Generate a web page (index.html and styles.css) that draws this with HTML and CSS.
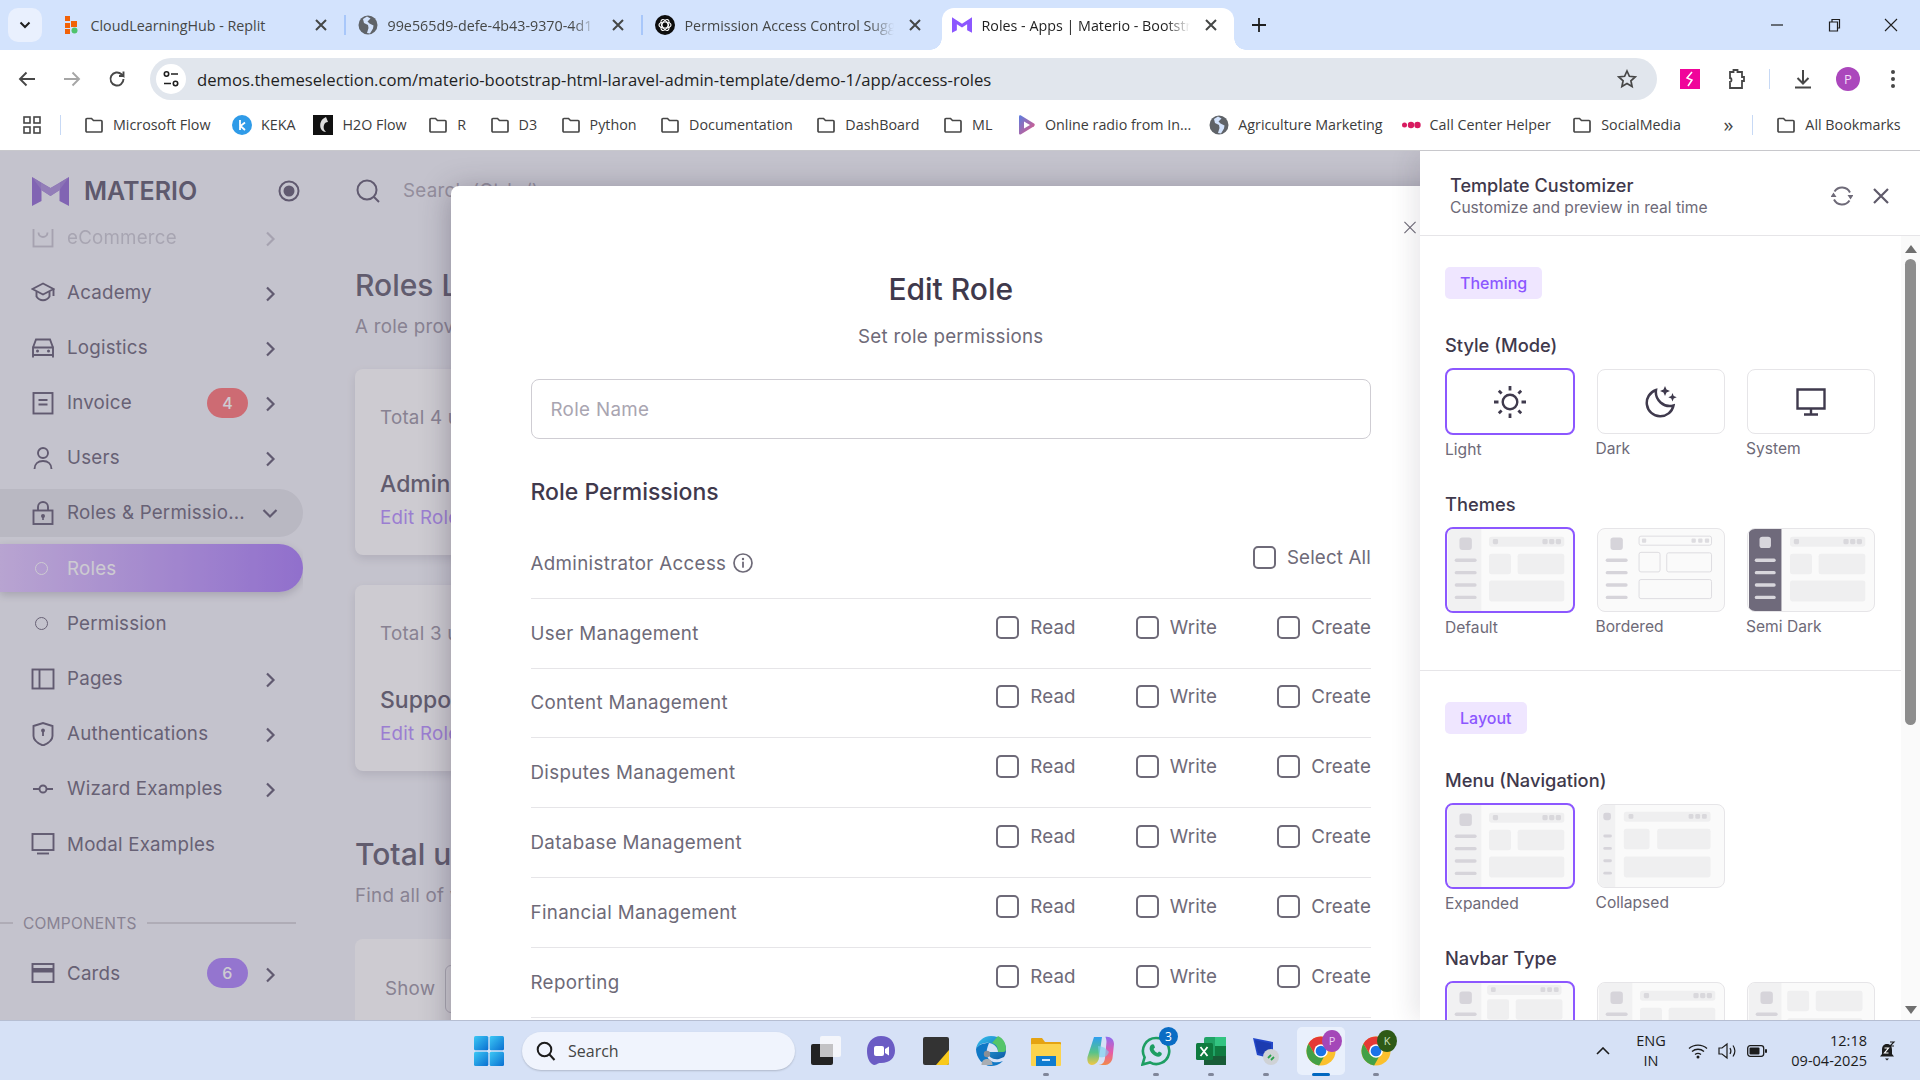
FILE: index.html
```html
<!DOCTYPE html>
<html lang="en">
<head>
  <meta charset="UTF-8" />
  <title>Roles - Apps | Materio - Bootstrap Admin Template</title>
  <link rel="stylesheet" href="styles.css">
</head>
<body>
  <svg class="defs" width="0" height="0" aria-hidden="true">
    <defs>
      <linearGradient id="gEdge" x1="0" y1="0" x2="1" y2="1"><stop offset="0" stop-color="#35c1f1"/><stop offset="1" stop-color="#0c59a4"/></linearGradient>
      <linearGradient id="gStart" x1="0" y1="0" x2="1" y2="1"><stop offset="0" stop-color="#3cc8f5"/><stop offset="1" stop-color="#0a6fd1"/></linearGradient>
      <linearGradient id="gCopA" x1="0" y1="0" x2="0" y2="1"><stop offset="0" stop-color="#2f9ff0"/><stop offset=".55" stop-color="#56c38a"/><stop offset="1" stop-color="#f2c744"/></linearGradient>
      <linearGradient id="gCopB" x1="0" y1="0" x2="0" y2="1"><stop offset="0" stop-color="#8f6cf0"/><stop offset=".55" stop-color="#e65ca8"/><stop offset="1" stop-color="#f28a4a"/></linearGradient>
      <linearGradient id="gRadio" x1="0" y1="0" x2="1" y2="1"><stop offset="0" stop-color="#5a7de0"/><stop offset="1" stop-color="#e8567f"/></linearGradient>

      <symbol id="i-folder" viewBox="0 0 20 20"><path d="M2 4.500a1 1 0 0 1 1-1h4.500l2 2H17a1 1 0 0 1 1 1V16a1 1 0 0 1-1 1H3a1 1 0 0 1-1-1z" fill="none" stroke="currentColor" stroke-width="1.700"/></symbol>
      <symbol id="i-globe" viewBox="0 0 20 20"><circle cx="10" cy="10" r="9.500" fill="#5f6368"/><path d="M9 1.500 5 4l1 4 4 2 .5 3-1.500 5 3 .5 3-5 .5-3-4-2-2-2 3-3z" fill="#d3e3fd"/></symbol>
      <symbol id="i-x" viewBox="0 0 14 14"><path d="M2 2l10 10M12 2 2 12" fill="none" stroke="currentColor" stroke-width="2"/></symbol>
      <symbol id="i-chev" viewBox="0 0 24 24"><path d="M9 5.500 15.500 12 9 18.500" fill="none" stroke="currentColor" stroke-width="2.200"/></symbol>
      <symbol id="i-bag" viewBox="0 0 24 24"><g fill="none" stroke="currentColor" stroke-width="1.900"><rect x="2.500" y="2.500" width="19" height="19"/><path d="M7.500 7.500a4.500 4.500 0 0 0 9 0"/></g></symbol>
      <symbol id="i-cap" viewBox="0 0 24 24"><g fill="none" stroke="currentColor" stroke-width="1.900"><path d="M12 3.500 1.500 9 12 14.500 22.500 9z"/><path d="M5.500 11.500v5c1.500 2.500 3.700 3.700 6.500 3.700s5-1.200 6.500-3.700v-5M22.500 9v7"/></g></symbol>
      <symbol id="i-car" viewBox="0 0 24 24"><g fill="none" stroke="currentColor" stroke-width="1.900"><path d="M2 12.500 5 4.500h14l3 8M2 12.500h20V20H2zM2 20v2.500M22 20v2.500"/></g><circle cx="6.500" cy="16" r="1.500" fill="currentColor"/><circle cx="17.500" cy="16" r="1.500" fill="currentColor"/></symbol>
      <symbol id="i-invoice" viewBox="0 0 24 24"><g fill="none" stroke="currentColor" stroke-width="1.900"><rect x="2.500" y="2" width="19" height="20.500"/><path d="M7.500 9h9M7.500 13.500h9"/></g></symbol>
      <symbol id="i-user" viewBox="0 0 24 24"><g fill="none" stroke="currentColor" stroke-width="1.900"><circle cx="12" cy="7" r="5"/><path d="M3.500 23c0-5 3.500-8 8.500-8s8.500 3 8.500 8"/></g></symbol>
      <symbol id="i-lock" viewBox="0 0 24 24"><g fill="none" stroke="currentColor" stroke-width="1.900"><rect x="2.500" y="9.500" width="19" height="13.500"/><path d="M7 9.500V6a5 5 0 0 1 10 0v3.500"/></g><circle cx="12" cy="15" r="2" fill="currentColor"/><rect x="11.200" y="15" width="1.600" height="4" fill="currentColor"/></symbol>
      <symbol id="i-layout" viewBox="0 0 24 24"><g fill="none" stroke="currentColor" stroke-width="1.900"><rect x="1.500" y="2.500" width="21" height="19"/><path d="M8.500 2.500v19"/></g></symbol>
      <symbol id="i-shield" viewBox="0 0 24 24"><path d="M2.500 4 12 1l9.500 3v10c0 4-3.500 7-9.500 9.500C6 21 2.500 18 2.500 14z" fill="none" stroke="currentColor" stroke-width="1.900"/><circle cx="12" cy="8.500" r="1.900" fill="currentColor"/><rect x="11.100" y="8.500" width="1.800" height="5.500" fill="currentColor"/></symbol>
      <symbol id="i-wizard" viewBox="0 0 24 24"><g fill="none" stroke="currentColor" stroke-width="1.900"><circle cx="12" cy="12" r="3.500"/><path d="M2 12h6.500M15.500 12H22"/></g></symbol>
      <symbol id="i-screen" viewBox="0 0 24 24"><g fill="none" stroke="currentColor" stroke-width="1.900"><rect x="1.500" y="2" width="21" height="16"/><path d="M6 21.500h12"/></g></symbol>
      <symbol id="i-card" viewBox="0 0 24 24"><rect x="1.500" y="3" width="21" height="18" fill="none" stroke="currentColor" stroke-width="1.900"/><rect x="1.500" y="7" width="21" height="4.500" fill="currentColor"/></symbol>

      <symbol id="t-side" viewBox="0 0 130 86">
        <rect x="12" y="9" width="13" height="13" rx="3" fill="#d6d4da"/>
        <g fill="#d6d4da"><rect x="7" y="31" width="23" height="3.500" rx="1.700"/><rect x="7" y="44" width="23" height="3.500" rx="1.700"/><rect x="7" y="57" width="23" height="3.500" rx="1.700"/><rect x="7" y="70" width="23" height="3.500" rx="1.700"/></g>
      </symbol>
      <symbol id="t-main" viewBox="0 0 130 86">
        <rect x="43" y="8" width="79" height="10.500" rx="2.500" fill="#efeff0"/>
        <g fill="#d9d8dc"><rect x="47" y="10.500" width="5.500" height="5.500" rx="1.500"/><rect x="99" y="10.500" width="5.500" height="5.500" rx="1.500"/><rect x="106" y="10.500" width="5.500" height="5.500" rx="1.500"/><rect x="113" y="10.500" width="5.500" height="5.500" rx="1.500"/></g>
        <g fill="#efeff0"><rect x="43" y="26" width="23" height="21.500" rx="2.500"/><rect x="73" y="26" width="49" height="21.500" rx="2.500"/><rect x="43" y="54" width="79" height="22" rx="2.500"/></g>
      </symbol>
      <symbol id="t-default" viewBox="0 0 130 86">
        <rect width="35" height="86" fill="#f1f1f2"/>
        <use href="#t-side"/><use href="#t-main"/>
      </symbol>
      <symbol id="t-bordered" viewBox="0 0 130 86">
        <use href="#t-side"/>
        <g fill="none" stroke="#dcdbdf"><rect x="42" y="7.500" width="76" height="9.500" rx="2"/><rect x="42" y="24.500" width="22" height="20.500" rx="2"/><rect x="71" y="25" width="47" height="20" rx="2"/><rect x="42" y="53" width="76" height="20" rx="2"/></g>
        <g fill="#dddce0"><rect x="45" y="10" width="4.500" height="4.500" rx="1"/><rect x="97" y="10" width="4.500" height="4.500" rx="1"/><rect x="104" y="10" width="4.500" height="4.500" rx="1"/><rect x="111" y="10" width="4.500" height="4.500" rx="1"/></g>
      </symbol>
      <symbol id="t-semi" viewBox="0 0 130 86">
        <rect width="34" height="86" fill="#6f6a7b"/>
        <rect x="11" y="8" width="12" height="12" rx="3" fill="#d8d6dc"/>
        <g fill="#d8d6dc"><rect x="6" y="31" width="22" height="3.500" rx="1.700"/><rect x="6" y="44" width="22" height="3.500" rx="1.700"/><rect x="6" y="57" width="22" height="3.500" rx="1.700"/><rect x="6" y="70" width="22" height="3.500" rx="1.700"/></g>
        <use href="#t-main"/>
      </symbol>
      <symbol id="t-collapsed" viewBox="0 0 130 86">
        <rect width="17" height="86" fill="#f1f1f2"/>
        <rect x="4.500" y="8" width="8" height="8" rx="2.500" fill="#d6d4da"/>
        <g fill="#d6d4da"><rect x="4.500" y="31" width="9" height="3" rx="1.500"/><rect x="4.500" y="44" width="9" height="3" rx="1.500"/><rect x="4.500" y="57" width="9" height="3" rx="1.500"/><rect x="4.500" y="70" width="9" height="3" rx="1.500"/></g>
        <rect x="26" y="7" width="91" height="10.500" rx="2.500" fill="#efeff0"/>
        <g fill="#d9d8dc"><rect x="31" y="9.500" width="5" height="5" rx="1.300"/><rect x="94" y="9.500" width="5" height="5" rx="1.300"/><rect x="101" y="9.500" width="5" height="5" rx="1.300"/><rect x="108" y="9.500" width="5" height="5" rx="1.300"/></g>
        <g fill="#efeff0"><rect x="26" y="25" width="27" height="21.500" rx="2.500"/><rect x="61" y="25" width="56" height="21.500" rx="2.500"/><rect x="26" y="54" width="91" height="22" rx="2.500"/></g>
      </symbol>
      <symbol id="t-sticky" viewBox="0 0 130 86">
        <rect width="35" height="86" fill="#f1f1f2"/>
        <use href="#t-side"/>
        <rect x="41" y="2" width="78" height="10.500" rx="2.500" fill="#efeff0"/>
        <g fill="#d9d8dc"><rect x="45" y="4.500" width="5" height="5" rx="1.300"/><rect x="97" y="4.500" width="5" height="5" rx="1.300"/><rect x="104" y="4.500" width="5" height="5" rx="1.300"/><rect x="111" y="4.500" width="5" height="5" rx="1.300"/></g>
        <g fill="#efeff0"><rect x="41" y="17" width="23" height="21.500" rx="2.500"/><rect x="71" y="17" width="49" height="21.500" rx="2.500"/></g>
      </symbol>
      <symbol id="t-hidden" viewBox="0 0 130 86">
        <rect width="34" height="86" fill="#f1f1f2"/>
        <use href="#t-side"/>
        <g fill="#efeff0"><rect x="40" y="8" width="23" height="21.500" rx="2.500"/><rect x="70" y="8" width="49" height="21.500" rx="2.500"/><rect x="40" y="37" width="79" height="22" rx="2.500"/></g>
      </symbol>

      <symbol id="c-chrome" viewBox="0 0 32 32">
        <circle cx="16" cy="16" r="15.500" fill="#fbc02d"/>
        <path d="M16 .5A15.500 15.500 0 0 0 2.600 8.200L9 19l7-3h14.500A15.500 15.500 0 0 0 16 .5z" fill="#e53935"/>
        <path d="M2.600 8.200A15.500 15.500 0 0 0 14 31.400L21 19 9 19z" fill="#43a047"/>
        <circle cx="16" cy="16" r="7.300" fill="#fff"/><circle cx="16" cy="16" r="5.700" fill="#1a73e8"/>
      </symbol>
    </defs>
  </svg>

  <header class="tabstrip">
    <button class="tab-list"><svg width="12" height="8" viewBox="0 0 12 8"><path d="M1.500 1.500 6 6l4.500-4.500" fill="none" stroke="#1f1f1f" stroke-width="2"/></svg></button>
    <div class="tab sep">
      <svg class="fav" viewBox="0 0 20 20"><path d="M4 1h5v5H4z" fill="#f26207"/><path d="M10 6h6v6h-6z" fill="#f26207"/><path d="M4 8h5v5H4zM4 14h5v5H4z" fill="#f26207"/><circle cx="13.500" cy="15.500" r="3" fill="#4fc36c"/></svg>
      <span class="tab-title">CloudLearningHub - Replit</span>
      <svg class="tab-x"><use href="#i-x"/></svg>
    </div>
    <div class="tab sep">
      <svg class="fav"><use href="#i-globe"/></svg>
      <span class="tab-title fading">99e565d9-defe-4b43-9370-4d1</span>
      <svg class="tab-x"><use href="#i-x"/></svg>
    </div>
    <div class="tab">
      <svg class="fav" viewBox="0 0 20 20"><circle cx="10" cy="10" r="10" fill="#0d0d0d"/><g fill="none" stroke="#fff" stroke-width="1.200"><ellipse cx="10" cy="10" rx="6" ry="3"/><ellipse cx="10" cy="10" rx="6" ry="3" transform="rotate(60 10 10)"/><ellipse cx="10" cy="10" rx="6" ry="3" transform="rotate(120 10 10)"/></g></svg>
      <span class="tab-title fading">Permission Access Control Sugg</span>
      <svg class="tab-x"><use href="#i-x"/></svg>
    </div>
    <div class="tab tab-active">
      <svg class="fav" viewBox="0 0 37 29"><path d="M0 0 18.500 12 37 0v29l-9-5V13l-9.500 6L9 13v11l-9 5z" fill="#8c57ff"/></svg>
      <span class="tab-title fading">Roles - Apps | Materio - Bootstr</span>
      <svg class="tab-x"><use href="#i-x"/></svg>
    </div>
    <svg class="new-tab" viewBox="0 0 16 16"><path d="M8 1v14M1 8h14" stroke="#1f1f1f" stroke-width="1.800"/></svg>
    <div class="win-ctrl">
      <svg viewBox="0 0 14 14"><path d="M1 7h12" stroke="#1f1f1f" stroke-width="1.200"/></svg>
      <svg viewBox="0 0 14 14"><path d="M2.500 4h8v9h-8zM5 4V1.500h7.500V10H10.500" fill="none" stroke="#1f1f1f" stroke-width="1.200"/></svg>
      <svg viewBox="0 0 14 14"><path d="M1 1l12 12M13 1 1 13" stroke="#1f1f1f" stroke-width="1.100"/></svg>
    </div>
  </header>

  <div class="toolbar">
    <svg class="tb-icon" viewBox="0 0 20 20"><path d="M18 10H3M9.500 3.500 3 10l6.500 6.500" fill="none" stroke="#474747" stroke-width="1.900"/></svg>
    <svg class="tb-icon" viewBox="0 0 20 20"><path d="M2 10h15M10.500 3.500 17 10l-6.500 6.500" fill="none" stroke="#a6a6a6" stroke-width="1.900"/></svg>
    <svg class="tb-icon" viewBox="0 0 20 20"><path d="M16.500 10a6.500 6.500 0 1 1-2-4.700L16.500 7V2.500M16.500 7H12" fill="none" stroke="#474747" stroke-width="1.900"/></svg>
    <div class="omnibox">
      <span class="site-info"><svg width="16" height="18" viewBox="0 0 16 18"><g fill="none" stroke="#1f1f1f" stroke-width="1.600"><circle cx="3.500" cy="4" r="2.200"/><path d="M8 4h7M1 13.500h7"/><circle cx="12.500" cy="13.500" r="2.200"/></g></svg></span>
      <span class="url">demos.themeselection.com/materio-bootstrap-html-laravel-admin-template/demo-1/app/access-roles</span>
      <svg class="star" viewBox="0 0 20 20"><path d="M10 2l2.400 5.300 5.800.6-4.300 3.900 1.200 5.700L10 14.600l-5.100 2.900 1.200-5.700L1.800 7.900l5.800-.6z" fill="none" stroke="#474747" stroke-width="1.700"/></svg>
    </div>
    <svg class="ext-pink" viewBox="0 0 20 20"><rect width="20" height="20" fill="#f0049a"/><path d="M12 3 7 9l5 2-4 6" fill="none" stroke="#fff" stroke-width="1.500"/></svg>
    <svg class="ext-puzzle" viewBox="0 0 20 22"><path d="M4 4h3.500V2h4v2H16v5h2v4h-2v7H4v-6c2 0 2-4 0-4z" fill="none" stroke="#474747" stroke-width="1.800"/></svg>
    <span class="tb-sep"></span>
    <svg class="ext-dl" viewBox="0 0 20 22"><path d="M10 2v13M4.500 10l5.500 5.500 5.500-5.500M2 19.500h16" fill="none" stroke="#474747" stroke-width="2"/></svg>
    <span class="avatar">P</span>
    <svg class="dots" viewBox="0 0 4 18"><circle cx="2" cy="2" r="2" fill="#474747"/><circle cx="2" cy="9" r="2" fill="#474747"/><circle cx="2" cy="16" r="2" fill="#474747"/></svg>
  </div>

  <nav class="bookmarks">
    <svg class="apps" viewBox="0 0 18 18"><g fill="none" stroke="#474747" stroke-width="1.600"><rect x="1" y="1" width="6" height="6"/><rect x="11" y="1" width="6" height="6"/><rect x="1" y="11" width="6" height="6"/><rect x="11" y="11" width="6" height="6"/></g></svg>
    <span class="bm-sep"></span>
    <a class="bm first"><svg><use href="#i-folder"/></svg>Microsoft Flow</a>
    <a class="bm site"><svg viewBox="0 0 20 20"><circle cx="10" cy="10" r="10" fill="#2f9be8"/><path d="M8 5v10M13 7.500 8.500 11l4.500 4" fill="none" stroke="#fff" stroke-width="1.800"/></svg>KEKA</a>
    <a class="bm first"><svg viewBox="0 0 20 20"><rect width="20" height="20" fill="#111"/><path d="M13 2C8 4 6 9 8 14c1 2 3 3 5 3-2-2-3-4-2-7 .6-2 2-3 4-3z" fill="#ddd"/></svg>H2O Flow</a>
    <a class="bm"><svg><use href="#i-folder"/></svg>R</a>
    <a class="bm"><svg><use href="#i-folder"/></svg>D3</a>
    <a class="bm"><svg><use href="#i-folder"/></svg>Python</a>
    <a class="bm"><svg><use href="#i-folder"/></svg>Documentation</a>
    <a class="bm"><svg><use href="#i-folder"/></svg>DashBoard</a>
    <a class="bm"><svg><use href="#i-folder"/></svg>ML</a>
    <a class="bm site"><svg viewBox="0 0 20 20"><path d="M3 1.500c0-1 1-1.500 2-1l13 8c1 .7 1 2 0 2.700l-13 8c-1 .6-2 0-2-1z" fill="url(#gRadio)"/><path d="M8 6.500 14 10l-6 3.500z" fill="#fff"/></svg>Online radio from In...</a>
    <a class="bm site"><svg><use href="#i-globe"/></svg>Agriculture Marketing</a>
    <a class="bm first"><svg viewBox="0 0 20 20"><circle cx="3.500" cy="10" r="2.500" fill="#d81b60"/><circle cx="10" cy="10" r="3.200" fill="#d81b60"/><circle cx="16.500" cy="10" r="3.200" fill="#d81b60"/></svg>Call Center Helper</a>
    <a class="bm first"><svg><use href="#i-folder"/></svg>SocialMedia</a>
    <span class="bm-more">»</span>
    <span class="bm-sep"></span>
    <a class="bm"><svg><use href="#i-folder"/></svg>All Bookmarks</a>
  </nav>

  <div class="screen">
    <aside class="sidebar">
      <div class="brand">
        <svg class="logo" viewBox="0 0 37 29"><path d="M0 0 9.500 6v18L0 29z" fill="#9c78d8"/><path d="M37 0 27.500 6v18l9.500 5z" fill="#9c78d8"/><path d="M0 0 18.500 11 37 0l-9.500 13-9 6-9-6z" fill="#a98cdc"/><path d="M9 6l9.500 5 9.500-5v7l-9.500 6-9.500-6z" fill="#b39adf"/></svg>
        <span class="brand-name">MATERIO</span>
        <svg class="brand-pin" viewBox="0 0 22 22"><circle cx="11" cy="11" r="9.500" fill="none" stroke="currentColor" stroke-width="2"/><circle cx="11" cy="11" r="5.500" fill="currentColor"/></svg>
      </div>
      <div class="menu">
        <a class="item fade"><svg class="ico"><use href="#i-bag"/></svg><span class="lbl">eCommerce</span><svg class="chev"><use href="#i-chev"/></svg></a>
        <a class="item"><svg class="ico"><use href="#i-cap"/></svg><span class="lbl">Academy</span><svg class="chev"><use href="#i-chev"/></svg></a>
        <a class="item"><svg class="ico"><use href="#i-car"/></svg><span class="lbl">Logistics</span><svg class="chev"><use href="#i-chev"/></svg></a>
        <a class="item"><svg class="ico"><use href="#i-invoice"/></svg><span class="lbl">Invoice</span><span class="badge red">4</span><svg class="chev"><use href="#i-chev"/></svg></a>
        <a class="item"><svg class="ico"><use href="#i-user"/></svg><span class="lbl">Users</span><svg class="chev"><use href="#i-chev"/></svg></a>
        <a class="item open"><svg class="ico"><use href="#i-lock"/></svg><span class="lbl">Roles &amp; Permissio...</span><svg class="chev down"><use href="#i-chev"/></svg></a>
        <a class="item active"><span class="dot"></span><span class="lbl">Roles</span></a>
        <a class="item"><span class="dot"></span><span class="lbl">Permission</span></a>
        <a class="item"><svg class="ico"><use href="#i-layout"/></svg><span class="lbl">Pages</span><svg class="chev"><use href="#i-chev"/></svg></a>
        <a class="item"><svg class="ico"><use href="#i-shield"/></svg><span class="lbl">Authentications</span><svg class="chev"><use href="#i-chev"/></svg></a>
        <a class="item"><svg class="ico"><use href="#i-wizard"/></svg><span class="lbl">Wizard Examples</span><svg class="chev"><use href="#i-chev"/></svg></a>
        <a class="item"><svg class="ico"><use href="#i-screen"/></svg><span class="lbl">Modal Examples</span></a>
        <div class="menu-head"><span>Components</span></div>
        <a class="item"><svg class="ico"><use href="#i-card"/></svg><span class="lbl">Cards</span><span class="badge purple">6</span><svg class="chev"><use href="#i-chev"/></svg></a>
      </div>
    </aside>

    <main class="content">
      <div class="navbar">
        <svg class="nav-search" viewBox="0 0 24 24"><g fill="none" stroke="currentColor" stroke-width="2"><circle cx="11" cy="11" r="9.500"/><path d="M18 18l5 5"/></g></svg>
        <span>Search (Ctrl+/)</span>
      </div>
      <h4 class="page-title">Roles List</h4>
      <p class="page-sub">A role provided access to predefined menus and features</p>
      <div class="role-card">
        <p class="rc-total">Total 4 users</p>
        <h5 class="rc-name">Administrator</h5>
        <a class="rc-edit">Edit Role</a>
      </div>
      <div class="role-card">
        <p class="rc-total">Total 3 users</p>
        <h5 class="rc-name">Support</h5>
        <a class="rc-edit">Edit Role</a>
      </div>
      <h4 class="page-title second">Total users with their roles</h4>
      <p class="page-sub">Find all of your company's administrator accounts</p>
      <div class="table-card">
        <span>Show</span>
        <span class="show-select"></span>
      </div>
    </main>

    <div class="backdrop"></div>

    <section class="modal">
      <svg class="modal-x" viewBox="0 0 14 14"><path d="M1 1l12 12M13 1 1 13" stroke="#6e6a78" stroke-width="1.200"/></svg>
      <h3 class="modal-title">Edit Role</h3>
      <p class="modal-sub">Set role permissions</p>
      <input class="role-input" type="text" placeholder="Role Name" />
      <h4 class="perm-title">Role Permissions</h4>
      <div class="perm-row">
        <span class="perm-name">Administrator Access <svg class="info" viewBox="0 0 20 20"><circle cx="10" cy="10" r="9" fill="none" stroke="#6e6a78" stroke-width="1.700"/><circle cx="10" cy="6" r="1.200" fill="#6e6a78"/><rect x="9.100" y="8.700" width="1.800" height="6" fill="#6e6a78"/></svg></span>
        <div class="checks"><label class="check"><input type="checkbox" />Select All</label></div>
      </div>
      <div class="perm-row">
        <span class="perm-name">User Management</span>
        <div class="checks"><label class="check"><input type="checkbox" />Read</label><label class="check"><input type="checkbox" />Write</label><label class="check"><input type="checkbox" />Create</label></div>
      </div>
      <div class="perm-row">
        <span class="perm-name">Content Management</span>
        <div class="checks"><label class="check"><input type="checkbox" />Read</label><label class="check"><input type="checkbox" />Write</label><label class="check"><input type="checkbox" />Create</label></div>
      </div>
      <div class="perm-row">
        <span class="perm-name">Disputes Management</span>
        <div class="checks"><label class="check"><input type="checkbox" />Read</label><label class="check"><input type="checkbox" />Write</label><label class="check"><input type="checkbox" />Create</label></div>
      </div>
      <div class="perm-row">
        <span class="perm-name">Database Management</span>
        <div class="checks"><label class="check"><input type="checkbox" />Read</label><label class="check"><input type="checkbox" />Write</label><label class="check"><input type="checkbox" />Create</label></div>
      </div>
      <div class="perm-row">
        <span class="perm-name">Financial Management</span>
        <div class="checks"><label class="check"><input type="checkbox" />Read</label><label class="check"><input type="checkbox" />Write</label><label class="check"><input type="checkbox" />Create</label></div>
      </div>
      <div class="perm-row">
        <span class="perm-name">Reporting</span>
        <div class="checks"><label class="check"><input type="checkbox" />Read</label><label class="check"><input type="checkbox" />Write</label><label class="check"><input type="checkbox" />Create</label></div>
      </div>
    </section>

    <aside class="customizer">
      <div class="cust-head">
        <div class="cust-head-text">
          <h4>Template Customizer</h4>
          <p>Customize and preview in real time</p>
        </div>
        <svg class="cust-refresh" viewBox="0 0 22 22"><g fill="none" stroke="#6e6a78" stroke-width="2"><path d="M3.500 6.500A9 9 0 0 1 19 7.500M18.500 15.500A9 9 0 0 1 3 14.500"/></g><path d="M-.5 12h6L2.500 7.500zM22.500 10h-6l3 4.500z" fill="#6e6a78"/></svg>
        <svg class="cust-close" viewBox="0 0 16 16"><path d="M1 1l14 14M15 1 1 15" stroke="#5f5a6a" stroke-width="2.200"/></svg>
      </div>
      <div class="cust-body">
        <div class="cust-scroll">
          <section class="cust-section">
            <span class="chip">Theming</span>
            <h5 class="opt-title">Style (Mode)</h5>
            <div class="opt-grid">
              <div class="opt"><div class="opt-box short sel"><svg viewBox="0 0 32 32"><circle cx="16" cy="16" r="7.300" fill="none" stroke="#3f3a4d" stroke-width="2.400"/><g stroke="#3f3a4d" stroke-width="2.800"><path d="M16 0v4.500M16 27.500V32M0 16h4.500M27.500 16H32M4.800 4.800l2.800 2.800M24.400 24.400l2.800 2.800M4.800 27.200l2.800-2.800M24.400 7.600l2.800-2.800"/></g></svg></div><span>Light</span></div>
              <div class="opt"><div class="opt-box short"><svg viewBox="0 0 32 32"><path d="M11 4A13.500 13.500 0 1 0 28.500 19.500 14 14 0 0 1 11 4z" fill="none" stroke="#3f3a4d" stroke-width="2.500"/><path d="M20 0l1.500 3.500L25 5l-3.500 1.500L20 10l-1.500-3.500L15 5l3.500-1.500zM27.500 7l1.200 3 3 1.200-3 1.200-1.200 3-1.200-3-3-1.200 3-1.200z" fill="#3f3a4d"/></svg></div><span>Dark</span></div>
              <div class="opt"><div class="opt-box short"><svg viewBox="0 0 32 32"><path d="M2.500 3.500h27v19h-27zM16 23v5M9 28.500h14" fill="none" stroke="#3f3a4d" stroke-width="2.400"/></svg></div><span>System</span></div>
            </div>
            <h5 class="opt-title next">Themes</h5>
            <div class="opt-grid">
              <div class="opt"><div class="opt-box thumb sel"><svg><use href="#t-default"/></svg></div><span>Default</span></div>
              <div class="opt"><div class="opt-box thumb"><svg><use href="#t-bordered"/></svg></div><span>Bordered</span></div>
              <div class="opt"><div class="opt-box thumb"><svg><use href="#t-semi"/></svg></div><span>Semi Dark</span></div>
            </div>
          </section>
          <section class="cust-section">
            <span class="chip">Layout</span>
            <h5 class="opt-title">Menu (Navigation)</h5>
            <div class="opt-grid">
              <div class="opt"><div class="opt-box thumb sel"><svg><use href="#t-default"/></svg></div><span>Expanded</span></div>
              <div class="opt"><div class="opt-box thumb"><svg><use href="#t-collapsed"/></svg></div><span>Collapsed</span></div>
            </div>
            <h5 class="opt-title next">Navbar Type</h5>
            <div class="opt-grid">
              <div class="opt"><div class="opt-box thumb sel"><svg><use href="#t-sticky"/></svg></div></div>
              <div class="opt"><div class="opt-box thumb"><svg><use href="#t-default"/></svg></div></div>
              <div class="opt"><div class="opt-box thumb"><svg><use href="#t-hidden"/></svg></div></div>
            </div>
          </section>
        </div>
        <div class="scrollbar">
          <svg class="sb-arrow" viewBox="0 0 12 8"><path d="M6 0l6 8H0z" fill="#6f6f6f"/></svg>
          <span class="sb-thumb"></span>
          <svg class="sb-arrow" viewBox="0 0 12 8"><path d="M6 8 0 0h12z" fill="#6f6f6f"/></svg>
        </div>
      </div>
    </aside>
  </div>

  <footer class="taskbar">
    <svg class="start" viewBox="0 0 30 30"><g fill="url(#gStart)"><rect width="14.300" height="14.300" rx="1.500"/><rect x="15.700" width="14.300" height="14.300" rx="1.500"/><rect y="15.700" width="14.300" height="14.300" rx="1.500"/><rect x="15.700" y="15.700" width="14.300" height="14.300" rx="1.500"/></g></svg>
    <div class="task-search">
      <svg viewBox="0 0 20 20"><g fill="none" stroke="#1c1c1c" stroke-width="2"><circle cx="8.500" cy="8.500" r="6.800"/><path d="M13.500 13.500 18.500 19"/></g></svg>
      <span>Search</span>
    </div>
    <div class="slot"><svg viewBox="0 0 30 30"><rect x="9" y="0" width="21" height="21" rx="2" fill="#f4f6fb"/><rect x="0" y="8" width="22" height="21" rx="2" fill="#232323"/><rect x="9" y="8" width="13" height="13" fill="#c3c3c5"/></svg></div>
    <div class="slot"><svg viewBox="0 0 30 30"><path d="M15 0C6 0 1 7 1 15c0 6 2 11 5 13 2 1.500 4 1 6-.5 1-.5 2-.5 3-.5 9 0 14-5 14-12.500C29 6 24 0 15 0z" fill="#6b5cc4"/><rect x="8" y="10" width="10" height="10" rx="2" fill="#fff"/><path d="M19 13l4-2.500v9L19 17z" fill="#fff"/></svg></div>
    <div class="slot"><svg viewBox="0 0 30 30"><rect x="2" y="1" width="26" height="28" rx="2" fill="#333"/><path d="M28 14v13a2 2 0 0 1-2 2H15z" fill="#f8c91c"/></svg></div>
    <div class="slot"><svg viewBox="0 0 30 30"><path d="M15 0C7 0 1 6 0 13c3-5 8-7 13-6 6 1 9 5 9 9H12c0 5 5 8 11 7l5-2c2-3 2-6 2-8C30 6 24 0 15 0z" fill="url(#gEdge)"/><path d="M22 0c5 2 8 7 8 13 0 2-1 3-3 3h-5C22 11 20 8 16 7z" fill="#55c56a"/><path d="M0 13c0 9 7 17 15 17 4 0 8-1 12-5-7 3-15 1-16-6-1-4 0-7 2-12C7 7 2 9 0 13z" fill="#1078c6"/><circle cx="11" cy="18" r="3.200" fill="#8a8f96"/><path d="M5.500 29c0-4 2.500-6 5.500-6s5.500 2 5.500 6z" fill="#a9adb2"/></svg></div>
    <div class="slot run"><svg viewBox="0 0 30 30"><path d="M0 3a1 1 0 0 1 1-1h10l3 4h15a1 1 0 0 1 1 1v3H0z" fill="#e5a312"/><rect y="8" width="30" height="22" rx="1" fill="#fcd34d"/><rect x="5" y="20" width="20" height="10" fill="#0f7cd0"/><rect x="11" y="23" width="8" height="2" fill="#cfe8fb"/></svg></div>
    <div class="slot"><svg viewBox="0 0 30 30"><path d="M8 1h8l-3 21c-.5 4-4 7-7 7-4 0-5-4-4.500-8z" fill="url(#gCopA)"/><path d="M19 1c5-1 9 2 9 7l-1.500 14c-.5 4-4 7-7 7h-7c4 0 6-3 6.500-7l1.500-16c0-2-.5-4-1-5z" fill="url(#gCopB)"/><path d="M12 10c4 0 8 2 11 6-2 5-6 6-10 5z" fill="#7dd0f0" opacity=".65"/></svg></div>
    <div class="slot run">
      <svg viewBox="0 0 30 30"><path d="M15 2A13 13 0 0 0 3.600 21.300L1.500 28.500 9 26.400A13 13 0 1 0 15 2z" fill="none" stroke="#1e9e63" stroke-width="2.600"/><path d="M10 9c1.500-1.500 3-1 3.500 1l.5 1.500-1.500 1.500c1 2 2 3 4 4l1.500-1.500 2 1c1 .7 1 2 0 3-2 2-5 1.500-8.500-1.500S8 11 10 9z" fill="#1e9e63"/></svg>
      <b class="slot-badge">3</b>
    </div>
    <div class="slot run"><svg viewBox="0 0 30 30"><rect x="8" y="1" width="22" height="28" rx="2" fill="#21a366"/><rect x="19" y="1" width="11" height="9" fill="#33c481"/><rect x="19" y="10" width="11" height="10" fill="#107c41"/><rect x="8" y="20" width="22" height="9" fill="#185c37"/><rect x="0" y="7" width="17" height="17" rx="1.500" fill="#0e7a3f"/><path d="M4.500 11l7 9M11.500 11l-7 9" stroke="#fff" stroke-width="1.800"/></svg></div>
    <div class="slot run"><svg viewBox="0 0 30 30"><path d="M2 2 22 6v17L6 19z" fill="#2347c8"/><path d="M4 4l16 3.500V20L7 17z" fill="#1c3bb0"/><path d="M3 20l4 .5 1 3-3-1z" fill="#e2e5ea"/><circle cx="20" cy="21" r="8" fill="#cfd2d6"/><path d="M17 22l3-3M20 24l3-3" stroke="#2ba24c" stroke-width="1.800"/></svg></div>
    <div class="slot active">
      <svg viewBox="0 0 32 32"><use href="#c-chrome"/></svg>
      <b class="slot-avatar violet">P</b>
    </div>
    <div class="slot run">
      <svg viewBox="0 0 32 32"><use href="#c-chrome"/></svg>
      <b class="slot-avatar green">K</b>
    </div>
    <div class="tray">
      <svg class="tray-up" viewBox="0 0 14 8"><path d="M1 7l6-6 6 6" fill="none" stroke="#1c1c1c" stroke-width="1.600"/></svg>
      <div class="tray-lang"><span>ENG</span><span>IN</span></div>
      <svg class="tray-wifi" viewBox="0 0 20 16"><g fill="none" stroke="#1c1c1c" stroke-width="1.300"><path d="M1 5.500c5-4.500 13-4.500 18 0M4 8.500c3.500-3 8.500-3 12 0M7 11.500c2-1.500 4-1.500 6 0"/></g><circle cx="10" cy="14" r="1.500" fill="#1c1c1c"/></svg>
      <svg class="tray-vol" viewBox="0 0 20 18"><path d="M1 6h3l5-4v14l-5-4H1z" fill="none" stroke="#1c1c1c" stroke-width="1.200"/><path d="M12 6c1.200 2 1.200 4 0 6M15 3.500c2.400 3.500 2.400 7.500 0 11" fill="none" stroke="#1c1c1c" stroke-width="1.200"/></svg>
      <svg class="tray-bat" viewBox="0 0 20 14"><rect x=".7" y="1.700" width="16" height="10.600" rx="2.500" fill="none" stroke="#1c1c1c" stroke-width="1.300"/><rect x="2.500" y="3.500" width="10" height="7" rx="1" fill="#1c1c1c"/><rect x="18" y="5" width="2" height="4" rx="1" fill="#1c1c1c"/></svg>
      <div class="tray-clock"><span>12:18</span><span>09-04-2025</span></div>
      <svg class="tray-bell" viewBox="0 0 18 20"><path d="M9 3c-3.500 0-5 2.500-5 6v4l-2 2.500h14L14 13V9c0-3.500-1.500-6-5-6z" fill="#1c1c1c"/><path d="M7 17.500h4L9 19.500z" fill="#1c1c1c"/><path d="M6.500 7h4l-4 5h4" fill="none" stroke="#fff" stroke-width="1.200"/><path d="M12 1h4l-4 4h4" fill="none" stroke="#1c1c1c" stroke-width="1.100"/></svg>
    </div>
  </footer>
</body>
</html>
```

FILE: styles.css
```css
* {
  box-sizing: border-box;
}
body {
  margin: 0;
  width: 1920px;
  height: 1080px;
  overflow: hidden;
  display: flex;
  flex-direction: column;
  background: #fff;
  font-family: "Open Sans", "Noto Sans", sans-serif;
  color: #1f1f1f;
}
h3, h4, h5, p {
  margin: 0;
}
.defs {
  position: absolute;
}

/* browser chrome */
.tabstrip {
  height: 50px;
  flex: none;
  display: flex;
  align-items: flex-end;
  padding-left: 8px;
  background: #d3e3fd;
}
.tab-list {
  width: 34px;
  height: 34px;
  margin: 0 8.500px 8px 0;
  padding: 0;
  border: none;
  border-radius: 10px;
  background: #e9f0fe;
  display: flex;
  align-items: center;
  justify-content: center;
}
.tab {
  width: 297px;
  height: 42px;
  padding: 0 16px 8px 10px;
  display: flex;
  align-items: center;
  gap: 10px;
  position: relative;
  font-size: 14.300px;
  color: #454746;
}
.tab.sep::after {
  content: "";
  position: absolute;
  right: 2px;
  top: 7px;
  width: 2px;
  height: 20px;
  background: #a8c7fa;
}
.tab-active {
  width: 292px;
  background: #fff;
  border-radius: 12px 12px 0 0;
  color: #1f1f1f;
  padding: 0 12px 8px 10px;
}
.tab-active::before,
.tab-active::after {
  content: "";
  position: absolute;
  bottom: 0;
  width: 12px;
  height: 12px;
}
.tab-active::before {
  left: -12px;
  background: radial-gradient(circle at 0 0, transparent 11.500px, #fff 12px);
}
.tab-active::after {
  right: -12px;
  background: radial-gradient(circle at 100% 0, transparent 11.500px, #fff 12px);
}
.fav {
  width: 20px;
  height: 20px;
  flex: none;
}
.tab-title {
  flex: 1;
  min-width: 0;
  white-space: nowrap;
}
.tab-title.fading {
  -webkit-mask-image: linear-gradient(to right, #000 88%, transparent);
  mask-image: linear-gradient(to right, #000 88%, transparent);
}
.tab-x {
  width: 14px;
  height: 14px;
  flex: none;
  margin: 0 4px;
  color: #454746;
}
.new-tab {
  width: 16px;
  height: 16px;
  margin: 0 0 17px 17px;
}
.win-ctrl {
  margin-left: auto;
  align-self: stretch;
  display: flex;
  align-items: center;
  gap: 43px;
  padding-right: 22px;
}
.win-ctrl svg {
  width: 14px;
  height: 14px;
}

.toolbar {
  height: 50px;
  flex: none;
  display: flex;
  align-items: flex-start;
  padding: 8px 0 0 17px;
  background: #fff;
}
.tb-icon {
  width: 20px;
  height: 20px;
  margin: 11px 25px 0 0;
}
.omnibox {
  width: 1507px;
  height: 42px;
  flex: none;
  margin-left: -2px;
  padding: 0 20px 0 6px;
  display: flex;
  align-items: center;
  border-radius: 21px;
  background: #e1e6ed;
}
.site-info {
  width: 30px;
  height: 30px;
  flex: none;
  border-radius: 50%;
  background: #fff;
  display: flex;
  align-items: center;
  justify-content: center;
}
.url {
  margin-left: 11px;
  font-size: 16.700px;
  color: #1f1f1f;
  white-space: nowrap;
}
.star {
  width: 20px;
  height: 20px;
  margin-left: auto;
}
.ext-pink {
  width: 20px;
  height: 20px;
  margin: 11px 0 0 23px;
}
.ext-puzzle {
  width: 20px;
  height: 22px;
  margin: 10px 0 0 26px;
}
.tb-sep {
  width: 1px;
  height: 20px;
  margin: 11px 0 0 23px;
  background: #c7d9f5;
}
.ext-dl {
  width: 20px;
  height: 22px;
  margin: 10px 0 0 23px;
}
.avatar {
  width: 24px;
  height: 24px;
  margin: 9px 0 0 23px;
  border-radius: 50%;
  background: #ab47bc;
  color: #f3dcf7;
  font-size: 13px;
  display: flex;
  align-items: center;
  justify-content: center;
}
.dots {
  width: 4px;
  height: 18px;
  margin: 12px 0 0 31px;
}

.bookmarks {
  height: 51px;
  flex: none;
  display: flex;
  align-items: center;
  padding: 0 0 1px 23px;
  border-bottom: 1px solid #c8c8cc;
  background: #fff;
  font-size: 14.300px;
  color: #3c3c3c;
}
.apps {
  width: 18px;
  height: 18px;
  flex: none;
}
.bm-sep {
  width: 1px;
  height: 20px;
  flex: none;
  margin: 0 23px 0 19px;
  background: #c7d9f5;
}
.bm {
  display: flex;
  align-items: center;
  gap: 9px;
  flex: none;
  margin-right: 23.500px;
  white-space: nowrap;
}
.bm.first {
  margin-right: 21.500px;
}
.bm.site {
  margin-right: 18px;
}
.bm svg {
  width: 20px;
  height: 20px;
  flex: none;
  color: #474747;
}
.bm-more {
  flex: none;
  margin-left: 21px;
  font-size: 20px;
  line-height: 1;
  color: #474747;
}

/* page behind the modal */
.screen {
  flex: 1;
  min-height: 0;
  display: flex;
  position: relative;
  overflow: hidden;
  background: #f4f5fa;
  font-family: Inter, "Noto Sans", sans-serif;
  font-size: 18.750px;
  color: #7a7486;
}
.sidebar {
  width: 325px;
  flex: none;
  display: flex;
  flex-direction: column;
  padding-right: 22px;
  letter-spacing: .2px;
}
.brand {
  height: 78px;
  flex: none;
  padding: 0 0 0 32px;
  display: flex;
  align-items: center;
  position: relative;
  top: 1px;
}
.logo {
  width: 37px;
  height: 29px;
}
.brand-name {
  margin-left: 15px;
  font-size: 25px;
  font-weight: 600;
  letter-spacing: 0;
  color: #6e6a7c;
}
.brand-pin {
  width: 22px;
  height: 22px;
  margin-left: 81px;
  color: #716b80;
}
.menu {
  flex: 1;
  min-height: 0;
  overflow: hidden;
  display: flex;
  flex-direction: column;
  gap: 7.200px;
}
.item {
  height: 48px;
  flex: none;
  display: flex;
  align-items: center;
  padding: 0 21px 0 31px;
  border-radius: 0 24px 24px 0;
  white-space: nowrap;
}
.item.fade {
  margin-top: -16px;
  opacity: .3;
}
.item.open {
  background: rgba(46, 38, 61, .07);
}
.item.active {
  background: linear-gradient(to right, #e4ccff, #b087f9);
  box-shadow: 0 3px 8px rgba(46, 38, 61, .2);
  color: #fff;
}
.ico {
  width: 24px;
  height: 24px;
  flex: none;
  margin-right: 12px;
  color: #716b80;
}
.dot {
  width: 13px;
  height: 13px;
  flex: none;
  margin: 0 19px 0 4px;
  border: 1.500px solid currentColor;
  border-radius: 50%;
}
.lbl {
  flex: 1;
  min-width: 0;
}
.badge {
  width: 41px;
  height: 30px;
  flex: none;
  margin-right: 10px;
  border-radius: 15px;
  color: #fff;
  font-size: 16px;
  font-weight: 500;
  display: flex;
  align-items: center;
  justify-content: center;
}
.badge.red {
  background: #ff8184;
}
.badge.purple {
  background: #b48ffd;
}
.chev {
  width: 24px;
  height: 24px;
  flex: none;
  margin-top: 3px;
  color: #716b80;
}
.chev.down {
  transform: rotate(90deg);
  margin-top: 0;
}
.menu-head {
  height: 28px;
  flex: none;
  margin: 34px 0 5px;
  display: flex;
  align-items: center;
  gap: 10px;
  font-size: 15.500px;
  text-transform: uppercase;
  color: #a5a0ad;
}
.menu-head::before {
  content: "";
  width: 13px;
  height: 2px;
  background: #d8d6dc;
}
.menu-head::after {
  content: "";
  flex: 1;
  height: 2px;
  margin-right: 7px;
  background: #d8d6dc;
}

.content {
  flex: 1;
  min-width: 0;
  padding-left: 30px;
  letter-spacing: .25px;
}
.navbar {
  height: 79px;
  display: flex;
  align-items: center;
  gap: 23px;
  color: #b3afba;
}
.nav-search {
  width: 24px;
  height: 24px;
  color: #716b80;
  margin-left: 1px;
}
.page-title {
  margin-top: 35px;
  font-size: 30px;
  line-height: 40px;
  font-weight: 500;
  letter-spacing: 0;
  color: #726e7e;
  white-space: nowrap;
}
.page-title.second {
  margin-top: 63px;
}
.page-sub {
  margin: 8px 0 28px;
  line-height: 28px;
  color: #a5a0ad;
  white-space: nowrap;
}
.role-card {
  width: 480px;
  height: 186px;
  margin-bottom: 30px;
  padding: 35px 25px 0;
  border-radius: 8px;
  background: #fff;
  box-shadow: 0 4px 10px rgba(46, 38, 61, .12);
}
.rc-total {
  line-height: 28px;
  color: #a5a0ad;
  white-space: nowrap;
}
.rc-name {
  margin-top: 36px;
  font-size: 23px;
  line-height: 32px;
  font-weight: 500;
  letter-spacing: 0;
  color: #726e7e;
}
.rc-edit {
  display: block;
  margin-top: 4px;
  line-height: 28px;
  color: #be9aff;
}
.table-card {
  width: 480px;
  height: 140px;
  margin-top: 29px;
  padding: 26px 30px;
  display: flex;
  align-items: flex-start;
  gap: 10px;
  border-radius: 8px;
  background: #fff;
  line-height: 48px;
  color: #a5a0ad;
}
.show-select {
  width: 100px;
  height: 48px;
  border: 1px solid #cfcdd3;
  border-radius: 6px;
}
.backdrop {
  position: absolute;
  inset: 0;
  background: rgba(46, 38, 61, .24);
}

/* modal */
.modal {
  position: absolute;
  left: 451px;
  top: 35px;
  width: 998px;
  height: 960px;
  padding: 83px 78px 0 79.500px;
  border-radius: 8px;
  background: #fff;
  box-shadow: 0 4px 30px rgba(46, 38, 61, .35);
  letter-spacing: .33px;
  color: #6e6a78;
}
.modal-x {
  position: absolute;
  left: 952px;
  top: 35px;
  width: 14px;
  height: 13px;
}
.modal-title {
  font-size: 30px;
  line-height: 40px;
  font-weight: 500;
  letter-spacing: 0;
  text-align: center;
  color: #3f394c;
}
.modal-sub {
  margin-top: 14px;
  line-height: 28px;
  letter-spacing: .25px;
  text-align: center;
}
.role-input {
  display: block;
  width: 100%;
  height: 60px;
  margin-top: 28px;
  padding: 0 19px;
  border: 1px solid #cfcdd3;
  border-radius: 8px;
  outline: none;
  font: inherit;
  letter-spacing: inherit;
}
.role-input::placeholder {
  color: #a9a5b1;
}
.perm-title {
  margin: 37px 0 21px;
  font-size: 23px;
  line-height: 32px;
  font-weight: 500;
  letter-spacing: 0;
  color: #3f394c;
}
.perm-row {
  height: 69.800px;
  display: flex;
  align-items: center;
  justify-content: space-between;
  border-bottom: 1px solid #e6e5e8;
}
.perm-name {
  display: flex;
  align-items: center;
  gap: 7px;
  white-space: nowrap;
}
.info {
  width: 20px;
  height: 20px;
}
.checks {
  display: flex;
  gap: 60px;
  margin-bottom: 12px;
  letter-spacing: .15px;
}
.check {
  display: flex;
  align-items: center;
  gap: 11px;
}
.check input {
  appearance: none;
  width: 23px;
  height: 23px;
  margin: 0;
  border: 2px solid #6e6a78;
  border-radius: 5px;
  background: #fff;
}

/* customizer */
.customizer {
  position: absolute;
  right: 0;
  top: 0;
  bottom: 0;
  width: 500px;
  display: flex;
  flex-direction: column;
  background: #fff;
  box-shadow: -8px 0 22px rgba(46, 38, 61, .1);
  color: #3f394c;
}
.cust-head {
  height: 85px;
  flex: none;
  padding: 0 31px 2px 30px;
  display: flex;
  align-items: center;
  border-bottom: 1px solid #e6e5e8;
}
.cust-head-text {
  flex: 1;
  padding-top: 7px;
}
.cust-head h4 {
  font-size: 18.100px;
  line-height: 24px;
  font-weight: 500;
}
.cust-head p {
  font-size: 15.600px;
  line-height: 22px;
  color: #6e6a78;
}
.cust-refresh {
  width: 22px;
  height: 22px;
  margin: 8px 20px 0 0;
}
.cust-close {
  width: 16px;
  height: 16px;
  margin-top: 8px;
}
.cust-body {
  flex: 1;
  min-height: 0;
  display: flex;
}
.cust-scroll {
  flex: 1;
  min-width: 0;
  overflow: hidden;
}
.cust-section {
  padding: 31px 25px 30px;
  border-bottom: 1px solid #e6e5e8;
}
.cust-section:last-child {
  border-bottom: none;
}
.chip {
  display: inline-block;
  height: 32px;
  padding: 0 15px;
  border-radius: 5px;
  background: #efe6ff;
  font-size: 16px;
  line-height: 32px;
  font-weight: 500;
  color: #8c57ff;
  vertical-align: top;
}
.opt-title {
  margin: 31.500px 0 9.500px;
  font-size: 18.300px;
  line-height: 28px;
  font-weight: 500;
}
.opt-title.next {
  margin: 28px 0 9px;
}
.opt-grid {
  display: grid;
  grid-template-columns: repeat(3, 130px);
  gap: 20.500px;
}
.opt span {
  display: block;
  margin-top: 3px;
  font-size: 15.600px;
  line-height: 24px;
  color: #6e6a78;
}
.opt-box {
  border: 1px solid #e6e5e8;
  border-radius: 8px;
  overflow: hidden;
  display: flex;
  align-items: center;
  justify-content: center;
  margin: 1px;
}
.opt-box.sel {
  margin: 0;
  border: 2px solid #8c57ff;
}
.opt-box.short {
  height: 65px;
}
.opt-box.short.sel {
  height: 67px;
}
.opt-box.short svg {
  width: 32px;
  height: 32px;
}
.opt-box.thumb {
  height: 84px;
  background: #fafafa;
}
.opt-box.thumb.sel {
  height: 86px;
}
.opt-box.thumb svg {
  width: 100%;
  height: 100%;
  display: block;
}
.scrollbar {
  width: 19px;
  flex: none;
  display: flex;
  flex-direction: column;
  align-items: center;
  padding: 9px 0 6px;
  background: #fafafa;
}
.sb-arrow {
  width: 12px;
  height: 8px;
  flex: none;
}
.sb-thumb {
  width: 11px;
  height: 466px;
  margin: 6px 0 auto;
  border-radius: 6px;
  background: #8c8c8c;
}

/* windows taskbar */
.taskbar {
  height: 60px;
  flex: none;
  display: flex;
  align-items: center;
  padding-left: 474px;
  border-top: 1px solid #b6bed2;
  background: #d6e1f6;
  font-size: 14.500px;
  color: #1c1c1c;
}
.start {
  width: 30px;
  height: 30px;
}
.task-search {
  width: 273px;
  height: 38px;
  margin: 0 3px 0 18px;
  padding-left: 14px;
  display: flex;
  align-items: center;
  gap: 12px;
  border-radius: 19px;
  background: #f0f4fd;
  box-shadow: 0 1px 2px rgba(0, 0, 0, .18);
  font-size: 16px;
  color: #444;
}
.task-search svg {
  width: 20px;
  height: 20px;
}
.slot {
  width: 55px;
  height: 48px;
  flex: none;
  display: flex;
  align-items: center;
  justify-content: center;
  position: relative;
}
.slot svg {
  width: 30px;
  height: 30px;
}
.slot.run::after,
.slot.active::after {
  content: "";
  position: absolute;
  left: 24.500px;
  bottom: -1px;
  width: 6px;
  height: 3px;
  border-radius: 2px;
  background: #80869a;
}
.slot.active::before {
  content: "";
  position: absolute;
  left: 3.500px;
  top: 0;
  width: 48px;
  height: 48px;
  border-radius: 5px;
  background: #e9f0fc;
}
.slot.active svg {
  position: relative;
}
.slot.active::after {
  left: 18.500px;
  width: 18px;
  background: #0067c0;
}
.slot-badge {
  position: absolute;
  right: 5px;
  top: 0;
  width: 19px;
  height: 19px;
  border-radius: 50%;
  background: #0a6cc4;
  color: #fff;
  font-size: 12px;
  font-weight: 400;
  display: flex;
  align-items: center;
  justify-content: center;
}
.slot-avatar {
  position: absolute;
  right: 6px;
  top: 3px;
  width: 20px;
  height: 22px;
  border-radius: 50%;
  font-size: 11px;
  font-weight: 400;
  display: flex;
  align-items: center;
  justify-content: center;
}
.slot-avatar.violet {
  background: #a447b8;
  color: #e8cdf0;
}
.slot-avatar.green {
  background: #2e5a17;
  color: #cfe3bf;
}
.tray {
  margin-left: auto;
  padding-right: 24px;
  display: flex;
  align-items: center;
}
.tray-up {
  width: 14px;
  height: 8px;
  margin-right: 21px;
}
.tray-lang {
  width: 40px;
  margin-right: 17px;
  display: flex;
  flex-direction: column;
  align-items: center;
  line-height: 20px;
}
.tray-wifi {
  width: 20px;
  height: 16px;
  margin-right: 10px;
}
.tray-vol {
  width: 20px;
  height: 18px;
  margin-right: 9px;
}
.tray-bat {
  width: 20px;
  height: 14px;
}
.tray-clock {
  width: 100px;
  display: flex;
  flex-direction: column;
  align-items: flex-end;
  line-height: 20px;
}
.tray-bell {
  width: 18px;
  height: 20px;
  margin-left: 11px;
}
```
